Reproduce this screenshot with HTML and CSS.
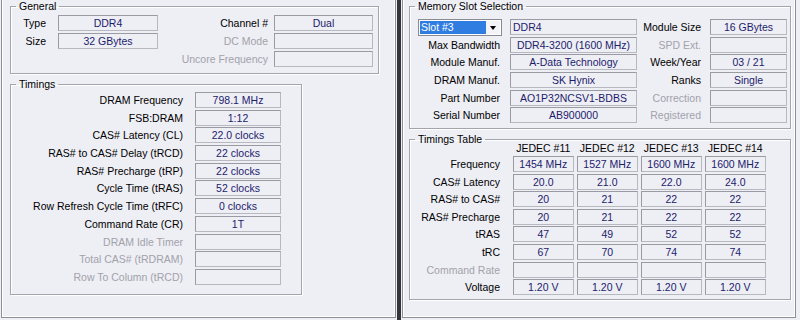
FILE: index.html
```html
<!DOCTYPE html>
<html lang="en">
<head>
    <meta charset="UTF-8">
    <title>Memory / SPD</title>
    <link rel="stylesheet" href="styles.css">
</head>
<body>

    <div class="pane pane-left">
        <fieldset class="group general">
            <legend>General</legend>
            <div class="grid general-grid">
                <span class="lbl">Type</span>
                <span class="val">DDR4</span>
                <span class="lbl lbl-r">Channel #</span>
                <span class="val">Dual</span>

                <span class="lbl">Size</span>
                <span class="val">32 GBytes</span>
                <span class="lbl lbl-r off">DC Mode</span>
                <span class="val"></span>

                <span class="lbl"></span>
                <span></span>
                <span class="lbl lbl-r off">Uncore Frequency</span>
                <span class="val"></span>
            </div>
        </fieldset>

        <fieldset class="group timings">
            <legend>Timings</legend>
            <div class="grid timings-grid">
                <span class="lbl">DRAM Frequency</span><span class="val">798.1 MHz</span>
                <span class="lbl">FSB:DRAM</span><span class="val">1:12</span>
                <span class="lbl">CAS# Latency (CL)</span><span class="val">22.0 clocks</span>
                <span class="lbl">RAS# to CAS# Delay (tRCD)</span><span class="val">22 clocks</span>
                <span class="lbl">RAS# Precharge (tRP)</span><span class="val">22 clocks</span>
                <span class="lbl">Cycle Time (tRAS)</span><span class="val">52 clocks</span>
                <span class="lbl">Row Refresh Cycle Time (tRFC)</span><span class="val">0 clocks</span>
                <span class="lbl">Command Rate (CR)</span><span class="val">1T</span>
                <span class="lbl off">DRAM Idle Timer</span><span class="val"></span>
                <span class="lbl off">Total CAS# (tRDRAM)</span><span class="val"></span>
                <span class="lbl off">Row To Column (tRCD)</span><span class="val"></span>
            </div>
        </fieldset>
    </div>

    <div class="divider"></div>

    <div class="pane pane-right">
        <fieldset class="group slot">
            <legend>Memory Slot Selection</legend>
            <div class="grid slot-grid">
                <div class="combo">
                    <span class="combo-text">Slot #3</span>
                    <span class="combo-btn"></span>
                </div>
                <span class="val val-left">DDR4</span>
                <span class="lbl lbl-r">Module Size</span>
                <span class="val">16 GBytes</span>

                <span class="lbl">Max Bandwidth</span>
                <span class="val">DDR4-3200 (1600 MHz)</span>
                <span class="lbl lbl-r off">SPD Ext.</span>
                <span class="val"></span>

                <span class="lbl">Module Manuf.</span>
                <span class="val">A-Data Technology</span>
                <span class="lbl lbl-r">Week/Year</span>
                <span class="val">03 / 21</span>

                <span class="lbl">DRAM Manuf.</span>
                <span class="val">SK Hynix</span>
                <span class="lbl lbl-r">Ranks</span>
                <span class="val">Single</span>

                <span class="lbl">Part Number</span>
                <span class="val">AO1P32NCSV1-BDBS</span>
                <span class="lbl lbl-r off">Correction</span>
                <span class="val"></span>

                <span class="lbl">Serial Number</span>
                <span class="val">AB900000</span>
                <span class="lbl lbl-r off">Registered</span>
                <span class="val"></span>
            </div>
        </fieldset>

        <fieldset class="group jedec">
            <legend>Timings Table</legend>
            <div class="grid jedec-grid">
                <span></span>
                <span class="head">JEDEC #11</span>
                <span class="head">JEDEC #12</span>
                <span class="head">JEDEC #13</span>
                <span class="head">JEDEC #14</span>

                <span class="lbl">Frequency</span>
                <span class="val">1454 MHz</span><span class="val">1527 MHz</span><span class="val">1600 MHz</span><span class="val">1600 MHz</span>

                <span class="lbl">CAS# Latency</span>
                <span class="val">20.0</span><span class="val">21.0</span><span class="val">22.0</span><span class="val">24.0</span>

                <span class="lbl">RAS# to CAS#</span>
                <span class="val">20</span><span class="val">21</span><span class="val">22</span><span class="val">22</span>

                <span class="lbl">RAS# Precharge</span>
                <span class="val">20</span><span class="val">21</span><span class="val">22</span><span class="val">22</span>

                <span class="lbl">tRAS</span>
                <span class="val">47</span><span class="val">49</span><span class="val">52</span><span class="val">52</span>

                <span class="lbl">tRC</span>
                <span class="val">67</span><span class="val">70</span><span class="val">74</span><span class="val">74</span>

                <span class="lbl off">Command Rate</span>
                <span class="val"></span><span class="val"></span><span class="val"></span><span class="val"></span>

                <span class="lbl">Voltage</span>
                <span class="val">1.20 V</span><span class="val">1.20 V</span><span class="val">1.20 V</span><span class="val">1.20 V</span>
            </div>
        </fieldset>
    </div>

</body>
</html>
```

FILE: styles.css
```css
* {
    box-sizing: border-box;
}
body {
    margin: 0;
    width: 800px;
    height: 320px;
    overflow: hidden;
    display: flex;
    align-items: flex-start;
    background-color: #eeeef5;
    font-family: "Liberation Sans", Arial, sans-serif;
    font-size: 10.5px;
    color: #000;
}

/* tab sheets */
.pane {
    height: 318px;
    border: 1px solid #8e8e98;
    border-top: none;
    box-shadow: inset 1px 0 0 #fff, inset -1px -1px 0 #fff;
}
.pane-left {
    width: 395px;
    margin: 0 1px 0 1px;
    padding: 0 0 0 8px;
}
.pane-right {
    width: 394px;
    margin-left: 1px;
    padding: 0 0 0 6px;
}
.divider {
    width: 4px;
    height: 320px;
    background-color: #34343c;
}

/* group boxes */
.group {
    margin: 0;
    padding: 0;
    border: 1px solid #a4a4ae;
    box-shadow: inset 1px 1px 0 #fff, 1px 1px 0 #fff;
}
.group legend {
    margin-left: 5px;
    padding: 0 3px;
    line-height: 13px;
}
.general {
    width: 369px;
    padding: 2px 5px 6px 0;
}
.timings {
    width: 292px;
    margin-top: 4px;
    padding: 1px 0 9px 0;
}
.slot {
    width: 382px;
    padding: 6px 3px 5px 0;
}
.jedec {
    width: 382px;
    margin-top: 4px;
    padding: 0 0 4px 0;
}

/* rows */
.grid {
    display: grid;
    align-items: center;
}
.general-grid {
    grid-template-columns: 47px 100px 1fr 99px;
    grid-auto-rows: 16px;
    row-gap: 2px;
}
.timings-grid {
    grid-template-columns: 184px 86px;
    grid-auto-rows: 16px;
    row-gap: 1.7px;
}
.slot-grid {
    grid-template-columns: 100px 127px 1fr 77px;
    grid-auto-rows: 16px;
    row-gap: 1.7px;
}
.jedec-grid {
    grid-template-columns: 100px repeat(4, 61.5px);
    grid-template-rows: 11px;
    grid-auto-rows: 16px;
    column-gap: 2.5px;
    row-gap: 1.6px;
    margin-top: -3px;
}
.jedec-grid .head {
    text-align: center;
    line-height: 11px;
    margin-bottom: 1.5px;
}

.lbl {
    text-align: right;
    padding-right: 12px;
    line-height: 16px;
    white-space: nowrap;
}
.lbl-r {
    padding-right: 6px;
}
.slot-grid .lbl {
    padding-right: 10px;
}
.slot-grid .lbl-r {
    padding-right: 9px;
}
.jedec-grid .lbl {
    padding-right: 10px;
}
.off {
    color: #a2a2aa;
}

.val {
    height: 16px;
    line-height: 15px;
    text-align: center;
    color: #1c1c6c;
    white-space: nowrap;
    overflow: hidden;
    border: 1px solid #b8b8c0;
    border-top-color: #9a9aa4;
    border-left-color: #9a9aa4;
}
.val-left {
    text-align: left;
    padding-left: 2px;
}

/* slot dropdown */
.combo {
    display: flex;
    height: 17px;
    margin: 0 8px;
    border: 1px solid #8a8a94;
    background-color: #fff;
    padding: 1px;
}
.combo-text {
    flex: 1;
    background-color: #2f7de0;
    color: #fff;
    line-height: 13px;
    padding-left: 1px;
}
.combo-btn {
    width: 14px;
    position: relative;
    background-color: #f4f4f8;
}
.combo-btn::after {
    content: "";
    position: absolute;
    left: 4px;
    top: 5px;
    border-left: 3.5px solid transparent;
    border-right: 3.5px solid transparent;
    border-top: 4px solid #000;
}
```
